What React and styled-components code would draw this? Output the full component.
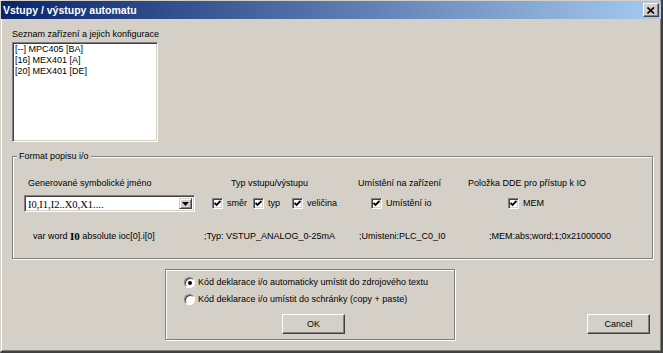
import React from 'react';
import styled, { createGlobalStyle } from 'styled-components';

const Global = createGlobalStyle`
  html, body {
    margin: 0;
    padding: 0;
    background: #d4d0c8;
  }
  body {
    font-family: "Liberation Sans", Arial, sans-serif;
    font-size: 9px;
    color: #000;
  }
`;

const Window = styled.div`
  width: 663px;
  height: 353px;
  box-sizing: border-box;
  background: #d4d0c8;
  border-left: 1px solid #d4d0c8;
  border-right: 2px solid #404040;
  border-bottom: 2px solid #404040;
  box-shadow: inset 1px 0 0 #fff, inset -1px -1px 0 #808080;
  display: flex;
  flex-direction: column;
`;

const TitleBar = styled.div`
  height: 18px;
  margin-top: 1px;
  background: linear-gradient(to right, #0a246a, #a6caf0);
  display: flex;
  align-items: center;
  justify-content: space-between;
  padding: 0 2px 0 2px;
`;

const Title = styled.span`
  color: #fff;
  font-weight: bold;
  font-size: 10.5px;
`;

const CloseBtn = styled.div`
  width: 14px;
  height: 12px;
  background: #d4d0c8;
  border: 1px solid;
  border-color: #fff #404040 #404040 #fff;
  box-shadow: inset -1px -1px 0 #808080;
  display: flex;
  align-items: center;
  justify-content: center;
`;

const Body = styled.div`
  flex: 1;
  padding: 10px 9px 0 11px;
  display: flex;
  flex-direction: column;
  align-items: flex-start;
`;

const Label = styled.div`
  line-height: 11px;
  white-space: nowrap;
`;

const ListBox = styled.div`
  margin-top: 2px;
  width: 146px;
  height: 100px;
  box-sizing: border-box;
  background: #fff;
  border: 1px solid;
  border-color: #808080 #fff #fff #808080;
  box-shadow: inset 1px 1px 0 #404040, inset -1px -1px 0 #d4d0c8;
  padding: 1px 1px;
`;

const ListItem = styled.div`
  line-height: 11px;
  padding-left: 1px;
  white-space: nowrap;
`;

const Group = styled.fieldset`
  margin: ${p => p.$mt || 0}px 0 0 ${p => p.$ml || 0}px;
  padding: ${p => p.$pad || '0'};
  width: ${p => p.$w}px;
  height: ${p => (p.$h ? `${p.$h}px` : 'auto')};
  box-sizing: border-box;
  min-width: 0;
  border: 1px solid #808080;
  box-shadow: inset 1px 1px 0 #fff, 1px 1px 0 #fff;
`;

const Legend = styled.legend`
  margin-left: 4px;
  padding: 0 2px;
  line-height: 11px;
  background: #d4d0c8;
`;

const Row = styled.div`
  display: flex;
  align-items: center;
  padding-left: ${p => p.$pl}px;
  margin-top: ${p => p.$mt}px;
  height: ${p => p.$h}px;
  line-height: 11px;
  white-space: nowrap;
`;

const Cell = styled.div`
  width: ${p => (p.$w ? `${p.$w}px` : 'auto')};
  flex: none;
  display: flex;
  align-items: center;
  white-space: pre;
`;

const Combo = styled.div`
  width: 171px;
  height: 17px;
  margin-right: 17px;
  box-sizing: border-box;
  background: #fff;
  border: 1px solid;
  border-color: #808080 #fff #fff #808080;
  box-shadow: inset 1px 1px 0 #404040, inset -1px -1px 0 #d4d0c8;
  display: flex;
  align-items: stretch;
  padding: 2px;
`;

const ComboText = styled.div`
  flex: 1;
  font-family: "Liberation Serif", "Times New Roman", serif;
  font-size: 10.5px;
  line-height: 13px;
  padding-left: 1px;
`;

const ComboArrow = styled.div`
  width: 13px;
  box-sizing: border-box;
  background: #d4d0c8;
  border: 1px solid;
  border-color: #d4d0c8 #404040 #404040 #d4d0c8;
  box-shadow: inset 1px 1px 0 #fff, inset -1px -1px 0 #808080;
  display: flex;
  align-items: center;
  justify-content: center;
`;

const Check = styled.span`
  width: 11px;
  height: 11px;
  box-sizing: border-box;
  background: #fff;
  border: 1px solid;
  border-color: #808080 #fff #fff #808080;
  box-shadow: inset 1px 1px 0 #404040, inset -1px -1px 0 #d4d0c8;
  display: inline-flex;
  align-items: center;
  justify-content: center;
  margin-right: 4px;
  flex: none;
`;

const Bold = styled.b`
  font-family: "Liberation Serif", "Times New Roman", serif;
  font-size: 11px;
`;

const BottomRow = styled.div`
  display: flex;
  align-items: flex-start;
  margin-top: 10px;
`;

const RadioRow = styled.div`
  height: 17px;
  display: flex;
  align-items: center;
  line-height: 11px;
  white-space: nowrap;
`;

const Radio = styled.span`
  width: 11px;
  height: 11px;
  box-sizing: border-box;
  border-radius: 50%;
  background: #fff;
  border: 1px solid;
  border-color: #808080 #fff #fff #808080;
  box-shadow: inset 1px 1px 0 #404040;
  display: inline-flex;
  align-items: center;
  justify-content: center;
  margin-right: 3px;
  &::after {
    content: '';
    width: 4px;
    height: 4px;
    border-radius: 50%;
    background: ${p => (p.$on ? '#000' : 'transparent')};
  }
`;

const Button = styled.div`
  width: 63px;
  height: 20px;
  box-sizing: border-box;
  margin: ${p => p.$m};
  background: #d4d0c8;
  border: 1px solid;
  border-color: #fff #404040 #404040 #fff;
  box-shadow: inset -1px -1px 0 #808080;
  display: flex;
  align-items: center;
  justify-content: center;
  line-height: 11px;
`;

const CheckMark = () => (
  <svg width="7" height="7" viewBox="0 0 7 7">
    <path d="M0.5 3 L2.5 5 L6.5 1" stroke="#000" strokeWidth="1.8" fill="none" />
  </svg>
);

const CheckItem = ({ w, children }) => (
  <Cell $w={w}>
    <Check>
      <CheckMark />
    </Check>
    {children}
  </Cell>
);

export default function App() {
  return (
    <>
      <Global />
      <Window>
        <TitleBar>
          <Title>Vstupy / výstupy automatu</Title>
          <CloseBtn>
            <svg width="8" height="7" viewBox="0 0 8 7">
              <path d="M0.5 0.5 L7 6.5 M7 0.5 L0.5 6.5" stroke="#000" strokeWidth="1.7" />
            </svg>
          </CloseBtn>
        </TitleBar>
        <Body>
          <Label>Seznam zařízení a jejich konfigurace</Label>
          <ListBox>
            <ListItem>[--] MPC405 [BA]</ListItem>
            <ListItem>[16] MEX401 [A]</ListItem>
            <ListItem>[20] MEX401 [DE]</ListItem>
          </ListBox>

          <Group $mt={9} $w={641} $pad="0 0 16px 0">
            <Legend>Format popisu i/o</Legend>
            <Row $pl={15} $mt={16} $h={11}>
              <Cell $w={203}>Generované symbolické jméno</Cell>
              <Cell $w={127}>Typ vstupu/výstupu</Cell>
              <Cell $w={110}>Umístění na zařízení</Cell>
              <Cell>Položka DDE pro přístup k IO</Cell>
            </Row>
            <Row $pl={11} $mt={6} $h={17}>
              <Combo>
                <ComboText>I0,I1,I2..X0,X1....</ComboText>
                <ComboArrow>
                  <svg width="7" height="4" viewBox="0 0 7 4">
                    <path d="M0 0 H7 L3.5 4 Z" fill="#000" />
                  </svg>
                </ComboArrow>
              </Combo>
              <CheckItem w={41}>směr</CheckItem>
              <CheckItem w={39}>typ</CheckItem>
              <CheckItem w={79}>veličina</CheckItem>
              <CheckItem w={137}>Umístění io</CheckItem>
              <CheckItem>MEM</CheckItem>
            </Row>
            <Row $pl={20} $mt={19} $h={11}>
              <Cell $w={171}>
                {'var word '}
                <Bold>I0</Bold>
                {' absolute ioc[0].i[0]'}
              </Cell>
              <Cell $w={155}>;Typ: VSTUP_ANALOG_0-25mA</Cell>
              <Cell $w={130}>;Umisteni:PLC_C0_I0</Cell>
              <Cell>;MEM:abs;word;1;0x21000000</Cell>
            </Row>
          </Group>

          <BottomRow>
            <Group as="div" $ml={153} $w={290} $h={71} $pad="4px 0 0 18px">
              <RadioRow>
                <Radio $on />
                Kód deklarace i/o automaticky umístit do zdrojového textu
              </RadioRow>
              <RadioRow>
                <Radio />
                Kód deklarace i/o umístit do schránky (copy + paste)
              </RadioRow>
              <Button $m="6px 0 0 98px">OK</Button>
            </Group>
            <Button $m="45px 0 0 132px">Cancel</Button>
          </BottomRow>
        </Body>
      </Window>
    </>
  );
}
